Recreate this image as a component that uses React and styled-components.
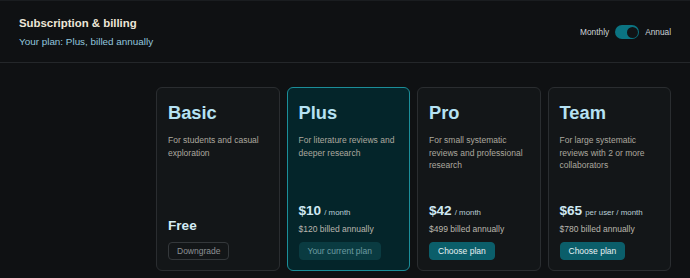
import React, { useState } from 'react';
import styled, { createGlobalStyle } from 'styled-components';

const plans = [
    {
        name: 'Basic',
        blurb: 'For students and casual exploration',
        free: true,
        action: 'Downgrade',
        kind: 'ghost',
    },
    {
        name: 'Plus',
        blurb: 'For literature reviews and deeper research',
        price: '$10',
        unit: '/ month',
        billed: '$120 billed annually',
        action: 'Your current plan',
        kind: 'current',
        current: true,
    },
    {
        name: 'Pro',
        blurb: 'For small systematic reviews and professional research',
        price: '$42',
        unit: '/ month',
        billed: '$499 billed annually',
        action: 'Choose plan',
        kind: 'primary',
    },
    {
        name: 'Team',
        blurb: 'For large systematic reviews with 2 or more collaborators',
        price: '$65',
        unit: 'per user / month',
        billed: '$780 billed annually',
        action: 'Choose plan',
        kind: 'primary',
    },
];

export default function App() {
    const [annual, setAnnual] = useState(true);

    return (
        <>
            <GlobalStyle />
            <Page>
                <Header>
                    <div>
                        <Title>Subscription &amp; billing</Title>
                        <Subtitle>Your plan: Plus, billed annually</Subtitle>
                    </div>
                    <Billing>
                        <span>Monthly</span>
                        <Switch
                            type="button"
                            on={annual ? 1 : 0}
                            onClick={() => setAnnual(a => !a)}
                        >
                            <Knob on={annual ? 1 : 0} />
                        </Switch>
                        <span>Annual</span>
                    </Billing>
                </Header>
                <Plans>
                    <div />
                    {plans.map(plan => (
                        <Card key={plan.name} current={plan.current ? 1 : 0}>
                            <PlanName>{plan.name}</PlanName>
                            <Blurb>{plan.blurb}</Blurb>
                            <PriceBlock>
                                {plan.free ? (
                                    <Free>Free</Free>
                                ) : (
                                    <>
                                        <Price>
                                            {plan.price}
                                            <Unit>{plan.unit}</Unit>
                                        </Price>
                                        <Billed>{plan.billed}</Billed>
                                    </>
                                )}
                            </PriceBlock>
                            <PlanButton kind={plan.kind}>{plan.action}</PlanButton>
                        </Card>
                    ))}
                </Plans>
            </Page>
        </>
    );
}

// styles

const GlobalStyle = createGlobalStyle`
    html, body {
        margin: 0;
        background: #0f1113;
    }
    body {
        font-family: 'Liberation Sans', Arial, sans-serif;
    }
`;

const Page = styled.div`
    width: 690px;
    height: 278px;
    overflow: hidden;
    background: #0f1113;
    border-top: 1px solid #1a1d20;
    box-sizing: border-box;
`;

const Header = styled.header`
    display: flex;
    justify-content: space-between;
    align-items: center;
    padding: 15px 19px 14px;
    border-bottom: 1px solid #24272a;
`;

const Title = styled.h2`
    margin: 0 0 5px;
    font-size: 11.4px;
    line-height: 14px;
    font-weight: 700;
    color: #ece6d8;
`;

const Subtitle = styled.p`
    margin: 0;
    font-size: 9.9px;
    line-height: 13px;
    color: #92c6de;
`;

const Billing = styled.div`
    display: flex;
    align-items: center;
    gap: 6px;
    font-size: 8.3px;
    color: #cdd4d8;
`;

const Switch = styled.button`
    position: relative;
    width: 24px;
    height: 14px;
    padding: 0;
    border: none;
    border-radius: 7px;
    background: ${props => (props.on ? '#0b7482' : '#3a3f44')};
    cursor: pointer;
`;

const Knob = styled.span`
    position: absolute;
    top: 1.5px;
    left: ${props => (props.on ? '11.5px' : '1.5px')};
    width: 11px;
    height: 11px;
    border-radius: 50%;
    background: #111416;
`;

const Plans = styled.div`
    display: grid;
    grid-template-columns: 130px repeat(4, 1fr);
    gap: 7px;
    padding: 24px 19px 0;
`;

const Card = styled.div`
    display: flex;
    flex-direction: column;
    height: 184px;
    box-sizing: border-box;
    padding: 14px 11px 10px;
    border-radius: 6px;
    border: 1px solid ${props => (props.current ? '#1b8e99' : '#2a2d30')};
    background: ${props => (props.current ? '#04252a' : '#131618')};
`;

const PlanName = styled.h3`
    margin: 0;
    font-size: 18.3px;
    line-height: 22px;
    font-weight: 700;
    color: #b6e2f3;
`;

const Blurb = styled.p`
    margin: 10px 0 0;
    font-size: 8.5px;
    line-height: 12.7px;
    color: #aca89f;
`;

const PriceBlock = styled.div`
    margin-top: auto;
    display: flex;
    flex-direction: column;
    gap: 2px;
`;

const Price = styled.div`
    font-size: 13.6px;
    line-height: 16.3px;
    font-weight: 700;
    color: #cfe8f2;
`;

const Unit = styled.span`
    margin-left: 3px;
    font-size: 7.9px;
    font-weight: 400;
    color: #b9cdd6;
`;

const Billed = styled.div`
    font-size: 8.5px;
    line-height: 12.7px;
    color: #bab6ae;
`;

const Free = styled.div`
    margin-bottom: 1.5px;
    font-size: 13.6px;
    line-height: 16.3px;
    font-weight: 700;
    color: #d4ebf4;
`;

const buttonLooks = {
    ghost: 'background: transparent; border-color: #34383b; color: #8d9195;',
    current: 'background: #0a3b41; border-color: #0a3b41; color: #6d9ba1;',
    primary: 'background: #0b5e6a; border-color: #0b5e6a; color: #e8f1f3;',
};

const PlanButton = styled.button`
    align-self: flex-start;
    margin-top: 6px;
    height: 18px;
    padding: 0 8px;
    border: 1px solid;
    border-radius: 4px;
    font-family: inherit;
    font-size: 8.5px;
    cursor: pointer;
    ${props => buttonLooks[props.kind]}
`;
